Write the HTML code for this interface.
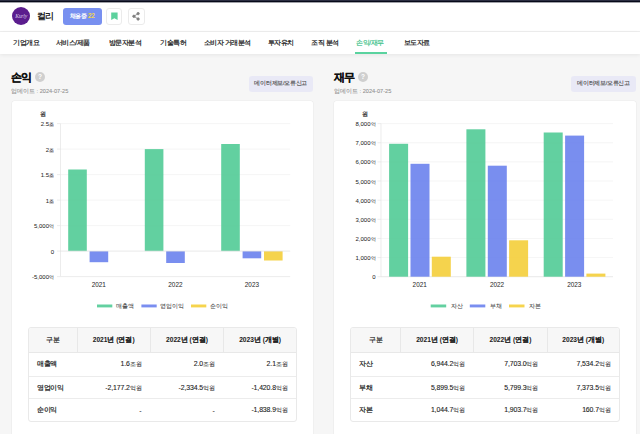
<!DOCTYPE html>
<html><head><meta charset="utf-8">
<style>
*{box-sizing:border-box;margin:0;padding:0}
html,body{width:640px;height:434px;overflow:hidden;background:#f6f6f6;font-family:"Liberation Sans",sans-serif;color:#222}
.abs{position:absolute}
#topbar{left:0;top:0;width:640px;height:3px;background:linear-gradient(#2b2e42 0,#2b2e42 1px,#070a1a 1px,#070a1a 2px,#a0a1a8 2px,#a0a1a8 3px);z-index:2}
#header{left:0;top:2px;width:640px;height:30px;background:#fff;border-bottom:1px solid #efefef}
#logo{left:12px;top:7.3px;width:18.2px;height:18.2px;border-radius:50%;background:#5b1d8e}
#logo span{position:absolute;left:0;top:5.5px;width:100%;text-align:center;font-family:"Liberation Serif",serif;font-style:italic;font-size:5.6px;letter-spacing:-0.2px;color:#d9c9ea}
#cname{left:37.3px;top:9.8px;font-size:9px;font-weight:bold;letter-spacing:-0.9px;color:#222;line-height:12px}
#hire{left:63px;top:8px;width:38.5px;height:16.5px;border-radius:3px;background:#7890f0;color:#fff;font-size:6.4px;font-weight:bold;letter-spacing:-0.2px;line-height:16.5px;text-align:center}
#hire b{color:#f3d64e}
.ibtn{top:8px;width:16.5px;height:16.5px;border:1px solid #ebebeb;border-radius:3px;background:#fff}
#nav{left:0;top:32px;width:640px;height:22px;background:#fff;box-shadow:0 1px 4px rgba(0,0,0,.07)}
.tab{top:0;height:22px;line-height:14px;padding-top:3.7px;font-size:6.6px;letter-spacing:-0.45px;color:#1a1a1a;white-space:nowrap;-webkit-text-stroke:0.22px #1a1a1a}
.tab.on{color:#38bf87;-webkit-text-stroke:0.2px #38bf87}
#uline{left:355.3px;top:52px;width:31.5px;height:2px;background:#5ad39f}
.title{font-size:10.5px;font-weight:bold;color:#111;line-height:12px;letter-spacing:-0.6px;-webkit-text-stroke:0.25px #111}
.help{margin-top:-0.5px;width:10px;height:10px;border-radius:50%;background:#cfcfcf;color:#fff;font-size:6.5px;font-weight:bold;text-align:center;line-height:10px}
.upd{font-size:5.6px;color:#8f8f8f;line-height:7px;-webkit-text-stroke:0.08px #8f8f8f}
.report{width:64.5px;height:15.6px;border-radius:3px;background:#e9e9f6;color:#444;font-size:5.8px;letter-spacing:-0.3px;line-height:15.6px;text-align:center;-webkit-text-stroke:0.1px #444}
.card{top:100.5px;height:400px;background:#fff;border-radius:2.5px;box-shadow:0 0 0 0.6px #ececec}
table{position:absolute;border-collapse:separate;border-spacing:0;border:1px solid #e9e9e9;border-radius:3px;font-size:6.3px;color:#222;-webkit-text-stroke:0.1px #222;table-layout:fixed;overflow:hidden}
th{background:#f7f7f7;height:25px;font-weight:bold;font-size:6.6px;-webkit-text-stroke:0.05px #222;border-bottom:1px solid #e8e8e8;border-left:1px solid #e8e8e8;text-align:center}
th:first-child{border-left:0;font-weight:normal;font-size:6.8px;letter-spacing:-0.3px;-webkit-text-stroke:0.15px #222}
td .u{font-size:6.2px;-webkit-text-stroke:0.05px #222;letter-spacing:-0.2px}
td{height:22.7px;text-align:right;padding-right:8.5px;padding-top:1px;font-size:6.9px;letter-spacing:-0.1px;border-top:1px solid #ececec}
tr:nth-child(2) td{border-top:0}
td:first-child{text-align:left;padding-left:8px;font-size:6.6px;letter-spacing:-0.35px;-webkit-text-stroke:0.22px #222}
svg text{font-family:"Liberation Sans",sans-serif;stroke:#2a2a2a;stroke-width:0.04px;fill:#2a2a2a}
svg text.w{stroke-width:0.2px}
svg text .k{font-size:5.3px}
svg text.lg{fill:#444;stroke:#444;stroke-width:0.05px;font-size:5.8px}
</style></head><body>
<div id="topbar" class="abs"></div>
<div id="header" class="abs"></div>
<div id="logo" class="abs"><span>Kurly</span></div>
<div id="cname" class="abs">컬리</div>
<div id="hire" class="abs"><span style="letter-spacing:-0.45px">채용중</span> <b>22</b></div>
<div class="abs ibtn" style="left:105.8px">
  <svg width="16.5" height="16.5" viewBox="0 0 16.5 16.5" style="position:absolute;left:-1px;top:-1px"><path d="M5.2 4.4h6.4v7.6l-3.2-1.7-3.2 1.7z" fill="#5cd19d"/></svg>
</div>
<div class="abs ibtn" style="left:128px">
  <svg width="16.5" height="16.5" viewBox="0 0 16.5 16.5" style="position:absolute;left:-1px;top:-1px"><g stroke="#808080" stroke-width="0.8" fill="#808080"><line x1="10.1" y1="5.6" x2="5.9" y2="8.3"/><line x1="10.1" y1="11" x2="5.9" y2="8.3"/><circle cx="10.1" cy="5.6" r="1.2"/><circle cx="10.1" cy="11" r="1.2"/><circle cx="5.9" cy="8.3" r="1.2"/></g></svg>
</div>

<div id="nav" class="abs">
  <div class="abs tab" style="left:13px">기업개요</div>
  <div class="abs tab" style="left:55.5px">서비스/제품</div>
  <div class="abs tab" style="left:108.7px">방문자분석</div>
  <div class="abs tab" style="left:160px">기술특허</div>
  <div class="abs tab" style="left:203.7px">소비자 거래분석</div>
  <div class="abs tab" style="left:267.5px">투자유치</div>
  <div class="abs tab" style="left:311.2px">조직 분석</div>
  <div class="abs tab on" style="left:356.2px">손익/재무</div>
  <div class="abs tab" style="left:403.7px">보도자료</div>
</div>
<div id="uline" class="abs"></div>

<!-- LEFT -->
<div class="abs title" style="left:11px;top:71.4px">손익</div>
<div class="abs help" style="left:35px;top:72.5px">?</div>
<div class="abs upd" style="left:11px;top:87.5px">업데이트 : 2024-07-25</div>
<div class="abs report" style="left:248.5px;top:76.3px">데이터제보/오류신고</div>
<div class="abs card" style="left:12px;width:301px"></div>

<!-- RIGHT -->
<div class="abs title" style="left:333.5px;top:71.4px">재무</div>
<div class="abs help" style="left:358px;top:72.5px">?</div>
<div class="abs upd" style="left:334px;top:87.5px">업데이트 : 2024-07-25</div>
<div class="abs report" style="left:571.2px;top:76.3px">데이터제보/오류신고</div>
<div class="abs card" style="left:334.4px;width:301.6px"></div>

<svg class="abs" style="left:0;top:0" width="640" height="434" viewBox="0 0 640 434">
  <g font-size="6" fill="#222">
  <!-- left chart grid -->
  <g stroke="#efefef" stroke-width="0.6">
    <line x1="60.5" y1="123.6" x2="290.2" y2="123.6"/>
    <line x1="60.5" y1="149.1" x2="290.2" y2="149.1"/>
    <line x1="60.5" y1="174.6" x2="290.2" y2="174.6"/>
    <line x1="60.5" y1="200.1" x2="290.2" y2="200.1"/>
    <line x1="60.5" y1="225.6" x2="290.2" y2="225.6"/>
  </g>
  <line x1="60.5" y1="123.6" x2="60.5" y2="276.6" stroke="#e4e4e4" stroke-width="0.7"/>
  <line x1="60.5" y1="276.6" x2="290.2" y2="276.6" stroke="#e4e4e4" stroke-width="0.7"/>
  <g opacity="0.9">
  <rect x="68.2" y="169.5" width="18.6" height="81.6" fill="#52cb96"/>
  <rect x="89.6" y="251.1" width="18.6" height="11.1" fill="#6b82ee"/>
  <rect x="144.8" y="149.1" width="18.6" height="102" fill="#52cb96"/>
  <rect x="166.2" y="251.1" width="18.6" height="11.9" fill="#6b82ee"/>
  <rect x="221.2" y="144" width="18.6" height="107.1" fill="#52cb96"/>
  <rect x="242.6" y="251.1" width="18.6" height="7.2" fill="#6b82ee"/>
  <rect x="264" y="251.1" width="18.6" height="9.4" fill="#f5cf3a"/>
  </g>
  <line x1="60.5" y1="251.1" x2="290.2" y2="251.1" stroke="#e0e0e0" stroke-width="0.7"/>
  <text x="40" y="116" font-size="5.8" class="w">원</text>
  <g text-anchor="end">
    <text x="54" y="126.20">2.5<tspan class="k">조</tspan></text>
    <text x="54" y="151.70">2<tspan class="k">조</tspan></text>
    <text x="54" y="177.20">1.5<tspan class="k">조</tspan></text>
    <text x="54" y="202.70">1<tspan class="k">조</tspan></text>
    <text x="54" y="228.20">5,000<tspan class="k">억</tspan></text>
    <text x="54" y="253.70">0</text>
    <text x="54" y="279.20">-5,000<tspan class="k">억</tspan></text>
  </g>
  <g text-anchor="middle">
    <text x="98.8" y="286.6" font-size="6.4">2021</text>
    <text x="175.4" y="286.6" font-size="6.4">2022</text>
    <text x="251.9" y="286.6" font-size="6.4">2023</text>
  </g>
  <g stroke="#e4e4e4" stroke-width="0.7"><line x1="57" y1="123.6" x2="60.5" y2="123.6"/><line x1="57" y1="149.1" x2="60.5" y2="149.1"/><line x1="57" y1="174.6" x2="60.5" y2="174.6"/><line x1="57" y1="200.1" x2="60.5" y2="200.1"/><line x1="57" y1="225.6" x2="60.5" y2="225.6"/><line x1="57" y1="251.1" x2="60.5" y2="251.1"/><line x1="57" y1="276.6" x2="60.5" y2="276.6"/><line x1="377.5" y1="123.6" x2="381" y2="123.6"/><line x1="377.5" y1="142.74" x2="381" y2="142.74"/><line x1="377.5" y1="161.88" x2="381" y2="161.88"/><line x1="377.5" y1="181.01" x2="381" y2="181.01"/><line x1="377.5" y1="200.15" x2="381" y2="200.15"/><line x1="377.5" y1="219.29" x2="381" y2="219.29"/><line x1="377.5" y1="238.43" x2="381" y2="238.43"/><line x1="377.5" y1="257.56" x2="381" y2="257.56"/><line x1="377.5" y1="276.7" x2="381" y2="276.7"/></g>
  <!-- left legend -->
  <rect x="97" y="304.5" width="15.3" height="2.9" fill="#52cb96" opacity="0.9"/>
  <text class="lg" x="115.8" y="308">매출액</text>
  <rect x="141.4" y="304.5" width="15.3" height="2.9" fill="#6b82ee" opacity="0.9"/>
  <text class="lg" x="160.4" y="308">영업이익</text>
  <rect x="191" y="304.5" width="15.3" height="2.9" fill="#f5cf3a" opacity="0.9"/>
  <text class="lg" x="210.3" y="308">순이익</text>

  <!-- right chart -->
  <g stroke="#efefef" stroke-width="0.6">
    <line x1="381" y1="123.6" x2="613" y2="123.6"/>
    <line x1="381" y1="142.74" x2="613" y2="142.74"/>
    <line x1="381" y1="161.88" x2="613" y2="161.88"/>
    <line x1="381" y1="181.01" x2="613" y2="181.01"/>
    <line x1="381" y1="200.15" x2="613" y2="200.15"/>
    <line x1="381" y1="219.29" x2="613" y2="219.29"/>
    <line x1="381" y1="238.43" x2="613" y2="238.43"/>
    <line x1="381" y1="257.56" x2="613" y2="257.56"/>
  </g>
  <line x1="381" y1="123.6" x2="381" y2="276.7" stroke="#e4e4e4" stroke-width="0.7"/>
  <line x1="381" y1="276.7" x2="613" y2="276.7" stroke="#e0e0e0" stroke-width="0.7"/>
  <g opacity="0.9">
  <rect x="389.1" y="143.8" width="19" height="132.9" fill="#52cb96"/>
  <rect x="410.5" y="163.8" width="19" height="112.9" fill="#6b82ee"/>
  <rect x="431.8" y="256.7" width="19" height="20" fill="#f5cf3a"/>
  <rect x="466.4" y="129.3" width="19" height="147.4" fill="#52cb96"/>
  <rect x="487.8" y="165.7" width="19" height="111" fill="#6b82ee"/>
  <rect x="509.1" y="240.3" width="19" height="36.4" fill="#f5cf3a"/>
  <rect x="543.7" y="132.5" width="19" height="144.2" fill="#52cb96"/>
  <rect x="565.1" y="135.6" width="19" height="141.1" fill="#6b82ee"/>
  <rect x="586.4" y="273.6" width="19" height="3.1" fill="#f5cf3a"/>
  </g>
  <text x="362.4" y="116" font-size="5.8" class="w">원</text>
  <g text-anchor="end">
    <text x="375.5" y="126.20">8,000<tspan class="k">억</tspan></text>
    <text x="375.5" y="145.34">7,000<tspan class="k">억</tspan></text>
    <text x="375.5" y="164.48">6,000<tspan class="k">억</tspan></text>
    <text x="375.5" y="183.61">5,000<tspan class="k">억</tspan></text>
    <text x="375.5" y="202.75">4,000<tspan class="k">억</tspan></text>
    <text x="375.5" y="221.89">3,000<tspan class="k">억</tspan></text>
    <text x="375.5" y="241.03">2,000<tspan class="k">억</tspan></text>
    <text x="375.5" y="260.16">1,000<tspan class="k">억</tspan></text>
    <text x="375.5" y="279.30">0</text>
  </g>
  <g text-anchor="middle">
    <text x="419.7" y="286.6" font-size="6.4">2021</text>
    <text x="497" y="286.6" font-size="6.4">2022</text>
    <text x="574.3" y="286.6" font-size="6.4">2023</text>
  </g>
  <rect x="430.7" y="304.5" width="15.5" height="2.9" fill="#52cb96" opacity="0.9"/>
  <text class="lg" x="450.6" y="308">자산</text>
  <rect x="469.8" y="304.5" width="15.5" height="2.9" fill="#6b82ee" opacity="0.9"/>
  <text class="lg" x="489.6" y="308">부채</text>
  <rect x="509" y="304.5" width="15.5" height="2.9" fill="#f5cf3a" opacity="0.9"/>
  <text class="lg" x="528.5" y="308">자본</text>
  </g>
</svg>

<table style="left:28px;top:327px;width:269px">
  <colgroup><col style="width:47.6px"><col style="width:73.3px"><col style="width:73.3px"><col></colgroup>
  <tr><th>구분</th><th>2021년 (연결)</th><th>2022년 (연결)</th><th>2023년 (개별)</th></tr>
  <tr><td>매출액</td><td>1.6<span class="u">조원</span></td><td>2.0<span class="u">조원</span></td><td>2.1<span class="u">조원</span></td></tr>
  <tr><td>영업이익</td><td>-2,177.2<span class="u">억원</span></td><td>-2,334.5<span class="u">억원</span></td><td>-1,420.8<span class="u">억원</span></td></tr>
  <tr><td>순이익</td><td>-</td><td>-</td><td>-1,838.9<span class="u">억원</span></td></tr>
</table>
<table style="left:350.3px;top:327px;width:269.7px">
  <colgroup><col style="width:48.7px"><col style="width:73.3px"><col style="width:73.3px"><col></colgroup>
  <tr><th>구분</th><th>2021년 (연결)</th><th>2022년 (연결)</th><th>2023년 (개별)</th></tr>
  <tr><td>자산</td><td>6,944.2<span class="u">억원</span></td><td>7,703.0<span class="u">억원</span></td><td>7,534.2<span class="u">억원</span></td></tr>
  <tr><td>부채</td><td>5,899.5<span class="u">억원</span></td><td>5,799.3<span class="u">억원</span></td><td>7,373.5<span class="u">억원</span></td></tr>
  <tr><td>자본</td><td>1,044.7<span class="u">억원</span></td><td>1,903.7<span class="u">억원</span></td><td>160.7<span class="u">억원</span></td></tr>
</table>
</body></html>
